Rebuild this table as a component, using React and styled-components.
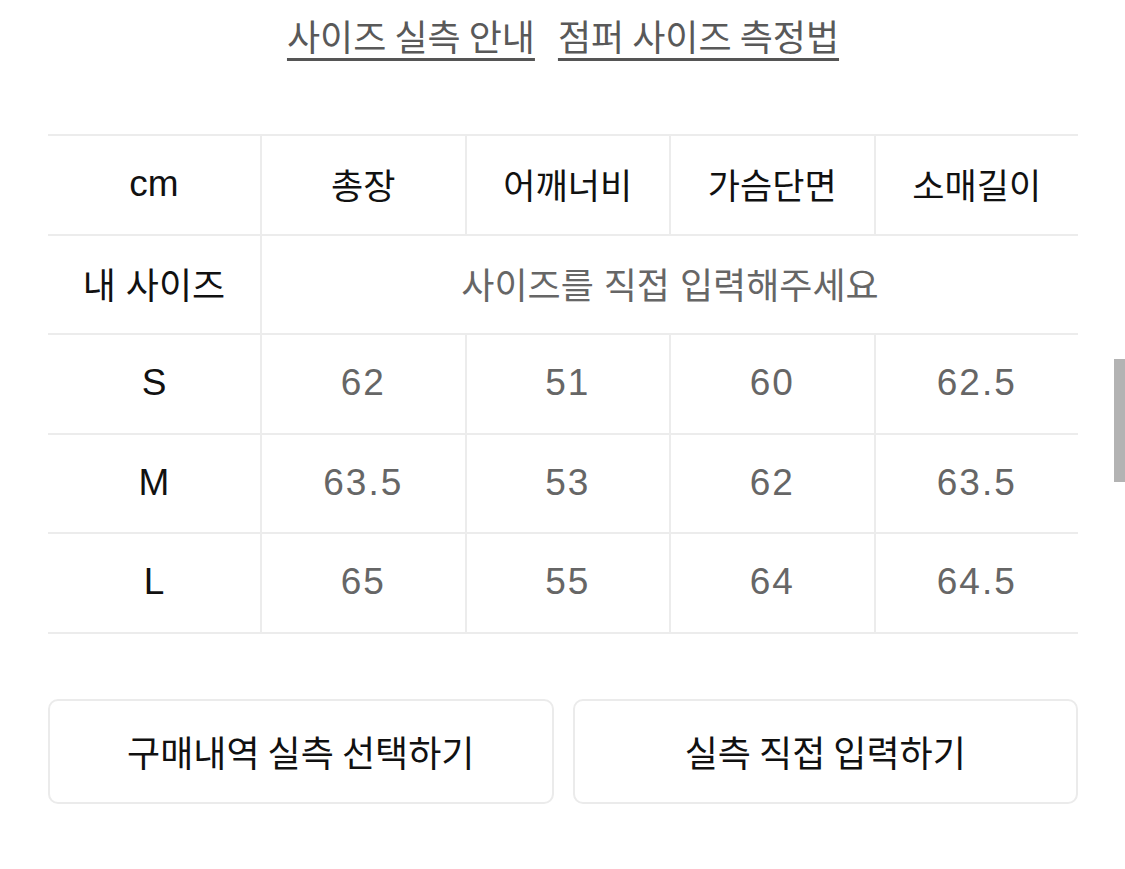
import React from 'react'
import styled, { createGlobalStyle } from 'styled-components'

const GlobalStyle = createGlobalStyle`
  html, body {
    margin: 0;
    padding: 0;
    background: #fff;
  }
  body {
    font-family: "Liberation Sans", "Noto Sans CJK KR", sans-serif;
  }
`

const Page = styled.div`
  width: 1125px;
  min-height: 869px;
  box-sizing: border-box;
  padding: 0 47px 0 48px;
  font-family: "Liberation Sans", "Noto Sans CJK KR", sans-serif;
`

const LinkRow = styled.div`
  display: flex;
  justify-content: center;
  gap: 23px;
  padding-top: 11px;
  height: 134px;
  box-sizing: border-box;
`

const GuideLink = styled.a`
  font-family: "Noto Sans CJK KR", sans-serif;
  font-size: 36px;
  line-height: 48px;
  color: #595959;
  text-decoration: underline;
  text-decoration-color: #555;
  text-decoration-thickness: 3px;
  text-underline-offset: 7px;
  cursor: pointer;
`

const Table = styled.div`
  display: grid;
  grid-template-columns: 212px repeat(4, 1fr);
  grid-auto-rows: 99.6px;
  border-top: 2px solid #ececec;
`

const Cell = styled.div`
  display: flex;
  align-items: center;
  justify-content: center;
  border-bottom: 2px solid #ececec;
  border-left: ${p => (p.$first ? 'none' : '2px solid #ececec')};
  grid-column: ${p => (p.$span ? `span ${p.$span}` : 'auto')};
  font-size: ${p => (p.$num ? '37px' : p.$head ? '35px' : '36px')};
  letter-spacing: ${p => (p.$num && p.$muted ? '2px' : '0')};
  color: ${p => (p.$muted ? '#666' : '#111')};
  padding-bottom: 2px;
`

const Actions = styled.div`
  display: grid;
  grid-template-columns: 1fr 1fr;
  gap: 19px;
  margin-top: 65px;
`

const ActionButton = styled.button`
  height: 105px;
  background: #fff;
  border: 2px solid #ebebeb;
  border-radius: 10px;
  font-family: "Noto Sans CJK KR", sans-serif;
  font-size: 36px;
  color: #111;
  cursor: pointer;
`

const ScrollThumb = styled.div`
  position: fixed;
  right: 0;
  top: 359px;
  width: 11px;
  height: 123px;
  background: #b3b3b3;
`

const headers = ['총장', '어깨너비', '가슴단면', '소매길이']
const sizes = [
  { name: 'S', values: ['62', '51', '60', '62.5'] },
  { name: 'M', values: ['63.5', '53', '62', '63.5'] },
  { name: 'L', values: ['65', '55', '64', '64.5'] },
]

export default function App() {
  return (
    <>
      <GlobalStyle />
      <Page>
        <LinkRow>
          <GuideLink>사이즈 실측 안내</GuideLink>
          <GuideLink>점퍼 사이즈 측정법</GuideLink>
        </LinkRow>
        <Table>
          <Cell $first $num>cm</Cell>
          {headers.map(h => (
            <Cell key={h} $head>{h}</Cell>
          ))}
          <Cell $first>내 사이즈</Cell>
          <Cell $span={4} $muted>사이즈를 직접 입력해주세요</Cell>
          {sizes.map(s => (
            <React.Fragment key={s.name}>
              <Cell $first $num>{s.name}</Cell>
              {s.values.map((v, i) => (
                <Cell key={i} $num $muted>{v}</Cell>
              ))}
            </React.Fragment>
          ))}
        </Table>
        <Actions>
          <ActionButton>구매내역 실측 선택하기</ActionButton>
          <ActionButton>실측 직접 입력하기</ActionButton>
        </Actions>
      </Page>
      <ScrollThumb />
    </>
  )
}
